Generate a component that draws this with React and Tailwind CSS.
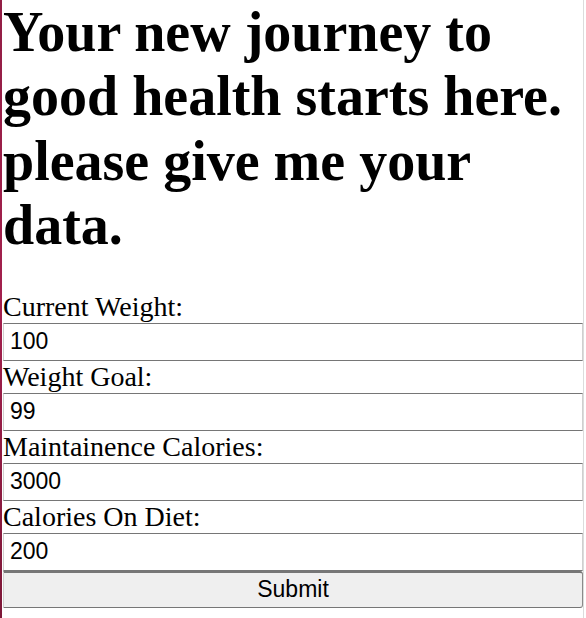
import React from "react";

const serif = { fontFamily: '"Liberation Serif", "Times New Roman", serif' };

function Field({ label, value }) {
  return (
    <>
      <label className="block h-[32px] text-[28px] leading-[32px] text-black whitespace-nowrap">
        {label}
      </label>
      <input
        readOnly
        value={value}
        className="block h-[38px] w-full border-y border-x border-t-[#767676] border-b-[#767676] border-l-[#cfcfcf] border-r-[#cfcfcf] bg-white px-[6px] text-[23px] text-black outline-none font-['Liberation_Sans',Arial,sans-serif]"
      />
    </>
  );
}

export default function App() {
  return (
    <div className="flex min-h-[618px] w-[586px] bg-white overflow-hidden">
      <div className="w-[2px] shrink-0 bg-gradient-to-b from-[#921e45] via-[#a3204d] to-[#7d1838]" />
      <div className="ml-[1px] w-[581px] shrink-0 border-r border-[#dcdcdc] flex flex-col" style={serif}>
        <h1 className="text-[56px] font-bold leading-[64.4px] text-black">
          Your new journey to good health starts here. please give me your data.
        </h1>
        <form className="mt-[33px] flex flex-col" onSubmit={(e) => e.preventDefault()}>
          <Field label="Current Weight:" value="100" />
          <Field label="Weight Goal:" value="99" />
          <Field label="Maintainence Calories:" value="3000" />
          <Field label="Calories On Diet:" value="200" />
          <button
            type="submit"
            className="h-[37px] w-full bg-[#efefef] border-t-2 border-b border-l border-r border-t-[#767676] border-b-[#767676] border-l-[#cfcfcf] border-r-[#8a8a8a] rounded-r-[3px] text-[23px] leading-none text-black font-['Liberation_Sans',Arial,sans-serif]"
          >
            Submit
          </button>
        </form>
      </div>
    </div>
  );
}
